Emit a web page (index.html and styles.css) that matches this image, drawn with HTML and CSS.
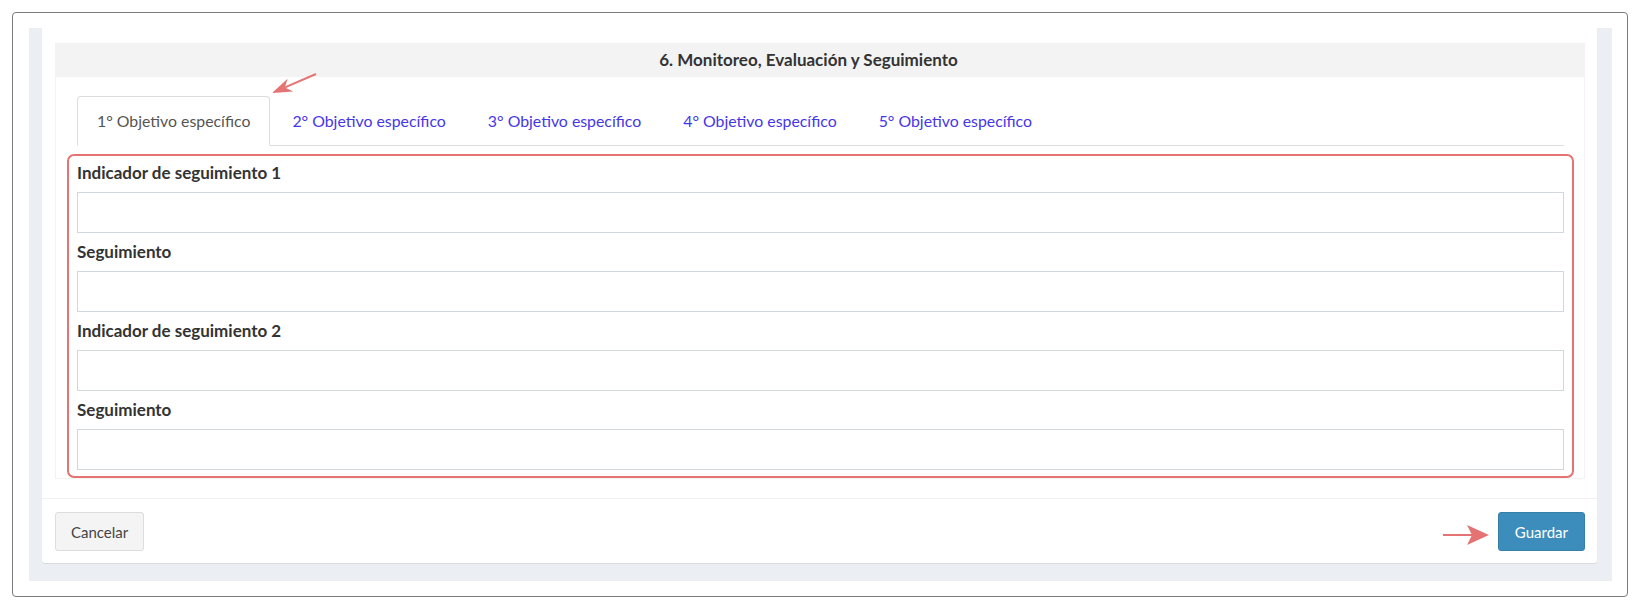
FILE: index.html
```html
<!DOCTYPE html>
<html lang="es">
<head>
<meta charset="utf-8">
<title>Monitoreo, Evaluación y Seguimiento</title>
<link rel="stylesheet" href="styles.css">
</head>
<body>
<div class="frame">
  <div class="backdrop">
    <div class="card">
      <div class="card-body">
        <div class="section-title">6. Monitoreo, Evaluación y Seguimiento</div>
        <div class="section-panel">
          <ul class="tabs">
            <li class="tab active"><a>1° Objetivo específico</a></li>
            <li class="tab"><a>2° Objetivo específico</a></li>
            <li class="tab"><a>3° Objetivo específico</a></li>
            <li class="tab"><a>4° Objetivo específico</a></li>
            <li class="tab"><a>5° Objetivo específico</a></li>
          </ul>
          <div class="tab-content">
            <div class="form-group">
              <label class="label">Indicador de seguimiento 1</label>
              <input class="input" type="text">
            </div>
            <div class="form-group">
              <label class="label">Seguimiento</label>
              <input class="input" type="text">
            </div>
            <div class="form-group">
              <label class="label">Indicador de seguimiento 2</label>
              <input class="input" type="text">
            </div>
            <div class="form-group">
              <label class="label">Seguimiento</label>
              <input class="input" type="text">
            </div>
          </div>
        </div>
      </div>
      <div class="card-footer">
        <button class="btn btn-default" type="button">Cancelar</button>
        <button class="btn btn-primary" type="button">Guardar</button>
      </div>
    </div>
  </div>
</div>
<svg class="annotations" viewBox="0 0 1642 612" width="1642" height="612" aria-hidden="true">
  <line x1="316" y1="74" x2="285" y2="87.4" class="arrow-line"/>
  <polygon points="272,93 287.6,78.7 284.9,87.4 293.2,91.5" class="arrow-head"/>
  <line x1="1443" y1="535" x2="1474" y2="535" class="arrow-line"/>
  <polygon points="1489,535 1467,525 1472,535 1467,545" class="arrow-head"/>
</svg>
</body>
</html>
```

FILE: styles.css
```css
html, body {
  margin: 0;
}

body {
  position: relative;
  width: 1642px;
  height: 612px;
  box-sizing: border-box;
  padding: 12px 14px 0 12px;
  overflow: hidden;
  background: #ffffff;
  color: #333333;
  font-family: Lato, "Noto Sans", sans-serif;
  font-size: 16px;
}

.frame {
  height: 585px;
  box-sizing: border-box;
  border: 1px solid #7a7a7a;
  border-radius: 4px;
  padding: 15px 15px 15px 16px;
}

.backdrop {
  height: 100%;
  box-sizing: border-box;
  background: #ebeef2;
  padding: 0 15px 16px 13px;
}

.card {
  background: #ffffff;
  border-radius: 0 0 3px 3px;
  box-shadow: 0 1px 1px rgba(0, 0, 0, 0.08);
}

.card-body {
  padding: 15px 12px 19px 13px;
}

.section-title {
  height: 34px;
  line-height: 33px;
  padding-right: 23px;
  background: #f3f3f3;
  text-align: center;
  font-weight: 700;
  font-size: 17px;
  color: #333333;
}

.section-panel {
  border: 1px solid #f3f3f3;
  border-top: 0;
  padding: 19px 20px 0 21px;
}

.tabs {
  display: flex;
  list-style: none;
  margin: 0;
  padding: 0;
  border-bottom: 1px solid #dddddd;
}

.tab {
  margin: 0 2px -1px 0;
}

.tab a {
  display: block;
  padding: 13px 19px;
  line-height: 22px;
  border: 1px solid transparent;
  border-radius: 4px 4px 0 0;
  color: #4636e8;
  font-size: 15.85px;
  cursor: pointer;
}

.tab.active a {
  background: #ffffff;
  border-color: #dddddd #dddddd transparent;
  color: #555555;
}

.tab-content {
  margin: 8px -10px 0;
  border: 2px solid #e57373;
  border-radius: 7px;
  padding: 6px 8px 6px;
}

.form-group {
  margin-bottom: 8px;
}

.form-group:last-child {
  margin-bottom: 0;
}

.label {
  display: block;
  margin-bottom: 8px;
  line-height: 22px;
  font-weight: 700;
  font-size: 17px;
  color: #333333;
}

.input {
  display: block;
  width: 100%;
  height: 41px;
  box-sizing: border-box;
  margin: 0;
  padding: 6px 12px;
  border: 1px solid #d2d6de;
  border-radius: 0;
  background: #ffffff;
  font: inherit;
}

.card-footer {
  display: flex;
  justify-content: space-between;
  border-top: 1px solid #f0f0f0;
  padding: 13px 12px 12px 13px;
}

.btn {
  height: 39px;
  padding: 0 15px;
  border-radius: 3px;
  font-family: inherit;
  font-size: 15px;
  cursor: pointer;
}

.btn-default {
  background: #f4f4f4;
  border: 1px solid #dddddd;
  color: #444444;
}

.btn-primary {
  padding: 0 16px;
  background: #3c8dbc;
  border: 1px solid #367fa9;
  color: #ffffff;
}

.annotations {
  position: absolute;
  left: 0;
  top: 0;
  pointer-events: none;
}

.arrow-line {
  stroke: #e57373;
  stroke-width: 2;
}

.arrow-head {
  fill: #e57373;
}
```
